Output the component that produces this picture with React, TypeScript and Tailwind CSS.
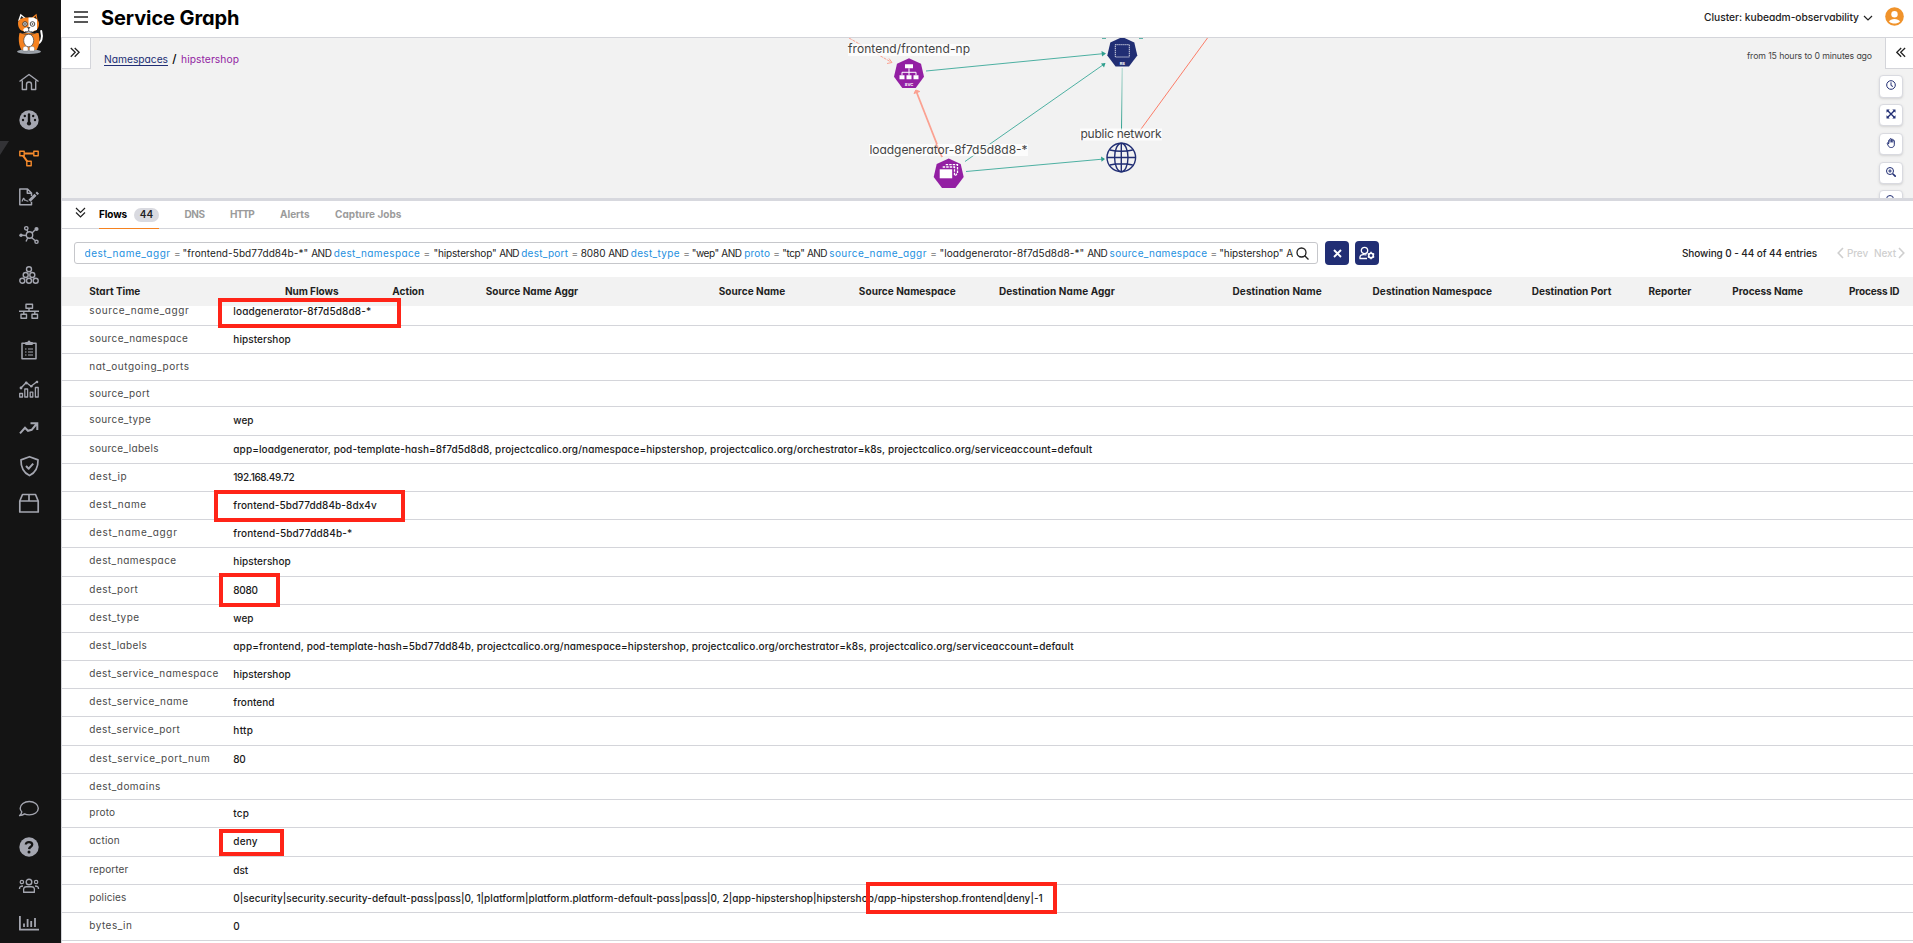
import { useLayoutEffect, useRef, useState } from 'react';
import type { ReactNode } from 'react';

/** One line of text whose tracking is adjusted so that it spans `w` pixels. */
function Fit({ t, w, className = '' }: { t: string; w: number; className?: string }) {
  const ref = useRef<HTMLSpanElement>(null);
  const [tracking, setTracking] = useState(0);
  useLayoutEffect(() => {
    if (ref.current) {
      const natural = ref.current.getBoundingClientRect().width - tracking * t.length;
      setTracking((w - natural) / t.length);
    }
  }, [t, w]);
  return (
    <span ref={ref} className={`inline-block shrink-0 whitespace-pre ${className}`} style={{ letterSpacing: `${tracking}px` }}>
      {t}
    </span>
  );
}

function Icon({ children, s = 20, className = '' }: { children: ReactNode; s?: number; className?: string }) {
  return (
    <svg
      width={s}
      height={s}
      viewBox={`0 0 ${s} ${s}`}
      fill="none"
      stroke="currentColor"
      strokeWidth="1.4"
      strokeLinejoin="round"
      className={`shrink-0 overflow-visible ${className}`}
    >
      {children}
    </svg>
  );
}

function CatLogo() {
  return (
    <svg width="30" height="42" viewBox="0 0 30 42" className="mt-[13px] ml-4 shrink-0">
      <ellipse cx="13" cy="38.6" rx="12" ry="2.4" fill="#9aa0a8" />
      <path d="M20.5 31c5-1 6.500-6 4.700-13" stroke="#fff" strokeWidth="2" fill="none" strokeLinecap="round" />
      <path d="M3.500 20C2 26 3 33 5.500 37h15c2.800-4 3.800-11 2-17z" fill="#f58220" />
      <path d="M2 8 4.500.8 10 5.200z" fill="#fff" />
      <path d="M4 6.500 5.300 3 8 5.300z" fill="#222" />
      <path d="M21.800 8.500 20.500.8 15 5.200z" fill="#f58220" />
      <path d="M20.800 6.500 19.700 3 17.500 5.200z" fill="#222" />
      <path d="M2 10c0-4 5-5.500 10.500-5.500S23 6 23 10.500 21 19 12.500 19 2 15 2 10z" fill="#f58220" />
      <path d="M12.500 4.500h5l3.500 2v10.500l-8.500 2z" fill="#fff" />
      <circle cx="9" cy="11" r="2.300" fill="#ddd" stroke="#333" strokeWidth=".9" />
      <circle cx="9" cy="11" r=".8" fill="#222" />
      <circle cx="16.500" cy="11" r="2.300" fill="#fff" stroke="#333" strokeWidth=".9" />
      <circle cx="16.500" cy="11" r=".8" fill="#222" />
      <ellipse cx="12.700" cy="17" rx="5.500" ry="2.800" fill="#fff" />
      <path d="M11.500 14.500h2.400l-1.200 1.400zM12.700 16v1.500M9 18.500c1.200.6 2.500.4 3.700-1 1.200 1.400 2.500 1.600 3.700 1" fill="#333" stroke="#333" strokeWidth=".7" />
      <path d="M4 19.500c5 2.500 12 2.500 17 0" stroke="#333" strokeWidth=".8" fill="none" />
      <ellipse cx="12.700" cy="27.500" rx="5" ry="6.300" fill="#fff" stroke="#444" strokeWidth=".7" />
      <path d="M7 38v-2.500c0-3 5-3 5 0V38zM13.500 38v-2.500c0-3 5-3 5 0V38z" fill="#fff" stroke="#666" strokeWidth=".4" />
    </svg>
  );
}

const topNav: { gap: string; icon: ReactNode }[] = [
  {
    gap: 'mt-[16.500px]',
    icon: <path d="M.5 9.500 10 2.500l9.500 7M3.300 8.500v9h4.200v-5a2.500 2.500 0 0 1 5 0v5h4.200v-9" />,
  },
  {
    gap: 'mt-[18.500px]',
    icon: (
      <>
        <circle cx="10" cy="10" r="9.700" fill="currentColor" stroke="none" />
        <path d="M10 4.500v8" stroke="#141414" strokeWidth="2.400" strokeLinecap="round" />
        <circle cx="10" cy="13.500" r="2.100" fill="#141414" stroke="none" />
        <g fill="#141414" stroke="none">
          <circle cx="5.800" cy="6" r="1.200" />
          <circle cx="14.200" cy="6" r="1.200" />
          <circle cx="4" cy="10" r="1.200" />
          <circle cx="16" cy="10" r="1.200" />
        </g>
      </>
    ),
  },
  {
    gap: 'mt-[17.500px]',
    icon: (
      <g className="text-[#f58a2c]" stroke="currentColor">
        <path d="M.8 3.300h4.400v4.400H.8zM14.800 3.300h4.400v4.400h-4.400zM7.800 13.300h4.400v4.400H7.800z" />
        <path d="M5.200 5.500h9.600M4 7.700l4.400 6" strokeWidth="2" />
      </g>
    ),
  },
  {
    gap: 'mt-[19.500px]',
    icon: (
      <>
        <path d="M12.500 9V6L8.500 2H.8v15.800h11.700v-3M8.300 2v4.200h4.200" strokeWidth="1.500" />
        <path d="M3 14.500c1.500-4 2-4 2.300-2 .3 1.500 1 0 1.500.8.500.9 1.500.8 2.500.8" strokeWidth="1.100" />
        <path d="m10.500 13.800 6-6M17.500 7l1.500-1.400" strokeWidth="3" />
      </>
    ),
  },
  {
    gap: 'mt-[17.500px]',
    icon: (
      <>
        <circle cx="10.500" cy="10" r="3.200" />
        <path d="M9 7.200 8 5M7.500 10.500 3 10.300M13 8l3-3M12.500 12.500l3.500 3" />
        <circle cx="7.300" cy="3.300" r="1.700" />
        <circle cx="2" cy="10.200" r="1.700" fill="currentColor" stroke="none" />
        <circle cx="17.500" cy="4" r="2.100" fill="currentColor" stroke="none" />
        <circle cx="17.500" cy="16.800" r="1.600" />
        <path d="M8.800 12.800 7 16.500" />
      </>
    ),
  },
  {
    gap: 'mt-[20.500px]',
    icon: (
      <>
        <circle cx="10" cy="4.300" r="2.500" />
        <circle cx="6.700" cy="10" r="2.500" />
        <circle cx="13.300" cy="10" r="2.500" />
        <circle cx="3.300" cy="15.700" r="2.500" />
        <circle cx="10" cy="15.700" r="2.500" />
        <circle cx="16.700" cy="15.700" r="2.500" />
      </>
    ),
  },
  {
    gap: 'mt-[16px]',
    icon: (
      <path d="M7 3.300h6.500v3.900H7zM2 13.300h5.500v4H2zM13 13.300h5.500v4H13zM0 10.300h20M10 7.200v3M4.800 10.300v3M15.800 10.300v3" />
    ),
  },
  {
    gap: 'mt-[19px]',
    icon: (
      <>
        <path d="M3 3.300h14v15.500H3z" strokeWidth="1.500" />
        <path d="M6.300 2h2.200a1.500 1.500 0 0 1 3 0h2.200v3H6.300z" fill="currentColor" stroke="none" />
        <path d="M6 9h1.500M9 9h5M6 12h1.500M9 12h5M6 15h1.500M9 15h5" strokeWidth="1.100" />
      </>
    ),
  },
  {
    gap: 'mt-[19px]',
    icon: (
      <>
        <path d="M.7 14.500h2.800V18H.7zM5.800 10h2.800v8H5.800zM11.200 13.200h2.600V18h-2.600zM16.400 8.500h2.800V18h-2.800z" strokeWidth="1.300" />
        <path d="m1.500 9.500 5.700-6L12 7.300l6.500-5" />
        <g fill="currentColor" stroke="none">
          <circle cx="2" cy="9" r="1.400" />
          <circle cx="7.200" cy="4" r="1.400" />
          <circle cx="12.300" cy="7.200" r="1.300" />
          <circle cx="18" cy="3" r="1.300" />
        </g>
      </>
    ),
  },
  {
    gap: 'mt-[19px]',
    icon: <path d="m1 15.300 5-5.500 3 3 3.700-1L17.500 6M11.500 5.300h6.800V12" strokeWidth="2" strokeLinejoin="miter" />,
  },
  {
    gap: 'mt-[18px]',
    icon: (
      <>
        <path d="M10.500.7 19 3.900c.2 7-2.500 12.600-8.500 15.700C4.500 16.500 1.800 10.900 2 3.900z" strokeWidth="1.700" />
        <path d="m7 10 2.700 2.700 4.500-5" strokeWidth="2" />
      </>
    ),
  },
  {
    gap: 'mt-[17px]',
    icon: <path d="M.8 8 3.500 1.500h13L19.200 8v11H.8zM.8 8h18.400M10 1.500V8" strokeWidth="1.700" />,
  },
];

const bottomNav: { gap: string; icon: ReactNode }[] = [
  {
    gap: 'mt-0',
    icon: (
      <path d="M10.300 2.500c5 0 9 3 9 6.700s-4 6.700-9 6.700c-1.800 0-3.300-.3-4.700-1-1.300 1-3 1.600-5 1.700 1.300-1 2-2.300 2.200-3.700C1.800 11.800 1.200 10.500 1.200 9.200c0-3.700 4.100-6.700 9.100-6.700z" />
    ),
  },
  {
    gap: 'mt-[17.500px]',
    icon: (
      <>
        <circle cx="10" cy="10" r="9.700" fill="currentColor" stroke="none" />
        <path d="M6.800 7.500c.3-3.400 6.600-3.200 6.400.2-.1 2-3 2.100-3.100 4.400" stroke="#141414" strokeWidth="2.300" />
        <circle cx="10" cy="15" r="1.500" fill="#141414" stroke="none" />
      </>
    ),
  },
  {
    gap: 'mt-[19px]',
    icon: (
      <>
        <circle cx="10" cy="6" r="2.800" />
        <circle cx="2.900" cy="6" r="1.700" strokeWidth="1.200" />
        <circle cx="17.100" cy="6" r="1.700" strokeWidth="1.200" />
        <path d="M4.700 16.300c-.8-5 1-5.600 2.800-5.600h5c1.800 0 3.600.6 2.800 5.600zM.5 13c0-2.300.5-3 3.500-3M19.500 13c0-2.300-.5-3-3.500-3" />
      </>
    ),
  },
  {
    gap: 'mt-[17.500px]',
    icon: <path d="M.9 3v13.700H20M5 10.500V14M8.600 6v8M12.200 8v6M16 5v9" strokeWidth="1.800" />,
  },
];

function Sidebar() {
  return (
    <nav className="flex h-full w-[61px] shrink-0 flex-col bg-[#141414] text-[#a4a6b0]">
      <CatLogo />
      {topNav.map((n, i) => (
        <div key={i} className={`relative flex h-5 shrink-0 pl-[19px] ${n.gap}`}>
          {i === 2 && (
            <svg width="9" height="15" className="absolute -top-[7px] left-0">
              <path d="M0 0h9L0 14z" fill="#333336" />
            </svg>
          )}
          <Icon>{n.icon}</Icon>
        </div>
      ))}
      <div className="grow" />
      {bottomNav.map((n, i) => (
        <div key={i} className={`flex h-5 shrink-0 pl-[19px] ${n.gap}`}>
          <Icon>{n.icon}</Icon>
        </div>
      ))}
      <div className="h-[10px] shrink-0" />
    </nav>
  );
}

function Header() {
  return (
    <header className="flex h-[38px] shrink-0 items-center border-b border-[#d4d5da] pr-[9px] pl-[13px]">
      <svg width="14" height="12" className="mt-[-3px]">
        <path d="M0 1h14M0 6h14M0 11h14" stroke="#222" strokeWidth="1.400" />
      </svg>
      <h1 className="-mt-[2px] ml-[13px] text-[20px] leading-6 font-bold text-black">
        <Fit t="Service Graph" w={138.500} />
      </h1>
      <div className="grow" />
      <Fit t="Cluster: kubeadm-observability" w={155} className="-mt-px text-[10.250px] font-medium text-[#222]" />
      <svg width="10" height="6" className="-mt-px ml-1">
        <path d="m1 1 4 4 4-4" fill="none" stroke="#222" strokeWidth="1.200" />
      </svg>
      <svg width="19" height="19" viewBox="0 0 19 19" className="-mt-1 ml-3">
        <circle cx="9.500" cy="9.500" r="9.300" fill="#f0932b" />
        <circle cx="9.500" cy="7.200" r="3.200" fill="#fff" />
        <path d="M4 14.500c1.300-3.400 9.700-3.400 11 0-3 2.700-8 2.700-11 0z" fill="#fff" />
      </svg>
    </header>
  );
}

const heptagon = '0,-15 12,-9.600 15,3.500 6.700,14.600 -6.700,14.600 -15,3.500 -12,-9.600';

function GraphCanvas() {
  return (
    <svg width="1851" height="160" viewBox="62 38 1851 160" className="block shrink-0" fill="none">
      <defs>
        <linearGradient id="fade" x1="0" y1="68" x2="0" y2="130" gradientUnits="userSpaceOnUse">
          <stop offset="0" stopColor="#a9d5cc" />
          <stop offset="1" stopColor="#2f9f8e" />
        </linearGradient>
      </defs>
      <g stroke="#fba191">
        <path d="M849 38l42 24" strokeDasharray="3 1" />
        <path d="m887 63.500 5-1-3-4" />
        <path d="M942 157 916.500 92" strokeWidth="1.800" />
      </g>
      <path d="m914 93.500 1.800-3.500 4 1.500z" fill="#fba191" stroke="#fba191" />
      <path d="M1207.500 38 1133 140" stroke="#fb7d68" />
      <g stroke="#3aa898" strokeWidth=".9">
        <path d="M926 71 1105 53.500" />
        <path d="M965 161.500 1105 63.500" />
        <path d="M966 171.500 1104 159" />
      </g>
      <g fill="#2f9f8e">
        <path d="m1101.500 51 4.500 2.400-4 3zM1101 63.500l4.500-.5-1.500 4.500zM1101 156.500l4 2.500-3.500 2.700zM1102 38h4v.8h-4zM1139 38h4v.8h-4z" />
      </g>
      <path d="M1122.200 68 1121.500 130" stroke="url(#fade)" />
      <g fill="#fff" fillOpacity=".75">
        <path d="M848 44h122v12H848zM869 144h159v12H869zM1080 128.500h82v12h-82z" />
      </g>
      <path d="M942 157 936 144" stroke="#fba191" strokeWidth="1.500" />
      <g fill="#444" fontSize="12" lengthAdjust="spacing">
        <text x="848" y="53" textLength="122">frontend/frontend-np</text>
        <text x="869.500" y="153.500" textLength="158">loadgenerator-8f7d5d8d8-*</text>
        <text x="1080.500" y="138" textLength="81">public network</text>
      </g>
      <g transform="translate(909 73.300)">
        <polygon points={heptagon} fill="#931fa3" />
        <path d="M-4-9h8v4h-8zM-9.500 2h5v4h-5zM-2.500 2h5v4h-5zM4.500 2h5v4h-5z" fill="#fff" />
        <path d="M0-5v7M-7 2v-3H7v3" stroke="#fff" />
        <text x="0" y="12.700" textAnchor="middle" fontSize="4" fontWeight="700" fill="#fff">SVC</text>
      </g>
      <g transform="translate(948.700 173.500)">
        <polygon points={heptagon} fill="#931fa3" />
        <path d="M-9-4.200h12.500v9H-9z" fill="#fff" />
        <path d="M-6-6.500H5.800V2.500" stroke="#fff" strokeDasharray="2.500 1" strokeWidth="1.300" />
        <path d="M-3-8.800H8.800V-.5L6.500 2.500" stroke="#fff" strokeDasharray="2.500 1" strokeWidth="1.300" />
      </g>
      <g transform="translate(1122.300 52)">
        <polygon points={heptagon} fill="#212e74" />
        <path d="M-7-7.300H7V5H-7z" stroke="#fff" strokeWidth=".9" strokeDasharray="1.200 .8" />
        <text x="0" y="12.700" textAnchor="middle" fontSize="4" fontWeight="700" fill="#fff">RS</text>
      </g>
      <g transform="translate(1121.300 157.500)" stroke="#212e74" strokeWidth="1.400">
        <circle r="14.300" fill="#f2f2f2" />
        <ellipse rx="6.700" ry="14.300" />
        <path d="M0-14.300v28.600M-14.300 0h28.600M-11.500-7.500c7 1.500 16 1.500 23 0M-11.500 7.500c7-1.500 16-1.500 23 0" />
      </g>
    </svg>
  );
}

const tools: ReactNode[] = [
  <g key="clock">
    <circle cx="5" cy="5" r="4.300" />
    <path d="M5 2.300V5.500l2 1" />
  </g>,
  <g key="expand">
    <path d="m1.500 1.500 7 7M8.500 1.500l-7 7" strokeWidth="1.400" />
    <path d="M.5.500h3.200L.5 3.700zM9.500.5v3.200L6.300.5zM.5 9.500V6.300l3.200 3.200zM9.500 9.500H6.300l3.200-3.200z" fill="currentColor" stroke="none" />
  </g>,
  <path
    key="hand"
    d="M2.700 6V2.500c0-.9 1.300-.9 1.300 0V1.200c0-.9 1.400-.9 1.400 0v.6c0-.9 1.400-.9 1.400 0v.9c0-.9 1.500-.8 1.500.1v4c0 3.300-5 3.600-6 1L1.300 5.500c-.3-.9.700-1.200 1.400.5zM4 2.500v2M5.400 1.800v2.600M6.800 2.500v2"
  />,
  <g key="zoomin">
    <circle cx="4" cy="4" r="3.500" />
    <path d="M4 2.300v3.400M2.300 4h3.400" />
    <path d="m6.700 6.700 3 3" strokeWidth="1.600" />
  </g>,
  <g key="zoomout">
    <circle cx="4" cy="4" r="3.500" />
    <path d="M2.300 4h3.400M6.700 6.700l3 3" />
  </g>,
];

const toolGap = ['mt-[6px]', 'mt-[6px]', 'mt-[6.500px]', 'mt-[6.500px]', 'mt-[6px]'];

function GraphPanel() {
  return (
    <section className="relative h-[160px] shrink-0 overflow-hidden bg-[#f2f2f2]">
      <GraphCanvas />
      <div className="absolute inset-0 flex justify-between">
        <div className="flex">
          <div className="flex h-[31px] w-[29px] items-center justify-center border-r border-b border-[#d4d5da] bg-white pr-[3px] pb-px">
            <svg width="10" height="11">
              <path d="m.8 1 4.400 4.300L.8 9.800M4.700 1l4.400 4.300-4.400 4.500" fill="none" stroke="#222" strokeWidth="1.300" />
            </svg>
          </div>
          <div className="flex h-[42px] items-center pl-[13px] text-[10.250px] leading-3">
            <Fit t="Namespaces" w={64} className="border-b border-[#212e74] text-[#212e74]" />
            <span className="w-[13px] text-center text-[11.500px] font-medium text-black">/</span>
            <Fit t="hipstershop" w={58} className="text-[#931fa3]" />
          </div>
        </div>
        <div className="flex">
          <Fit t="from 15 hours to 0 minutes ago" w={125} className="mt-3 mr-[7px] text-[8.750px] leading-3 text-[#444]" />
          <div className="flex flex-col items-end">
            <div className="flex h-[31px] w-[28px] shrink-0 items-center justify-center border-b border-l border-[#d4d5da] bg-white pr-px pl-1 pb-px">
              <svg width="10" height="11">
                <path d="M5.200 1 .8 5.300l4.400 4.500M9.100 1 4.700 5.300l4.400 4.500" fill="none" stroke="#222" strokeWidth="1.300" />
              </svg>
            </div>
            {tools.map((t, i) => (
              <div
                key={i}
                className={`mr-[10px] flex h-[22.500px] w-6 shrink-0 items-center justify-center rounded-[4px] border border-[#d9dae0] bg-white pb-[2px] text-[#212e74] shadow-sm ${toolGap[i]}`}
              >
                <svg width="10" height="10" viewBox="0 0 10 10" fill="none" stroke="currentColor" strokeWidth="1">
                  {t}
                </svg>
              </div>
            ))}
          </div>
        </div>
      </div>
    </section>
  );
}

function Tabs() {
  return (
    <div className="flex h-7 shrink-0 items-stretch border-b border-[#d4d5da] pl-[13px] text-[10px] font-bold text-[#9b9b9b]">
      <svg width="11" height="12" className="mt-[6px]">
        <path d="m1 1 4.500 4.500L10 1M1 5.500 5.500 10 10 5.500" fill="none" stroke="#222" strokeWidth="1.200" />
      </svg>
      <div className="-mb-px ml-[13px] flex w-[60px] items-center justify-between border-b border-[#f58220] text-[#222]">
        <Fit t="Flows" w={28} className="text-black" />
        <span className="flex h-[14px] w-[25px] items-center justify-center rounded-full bg-[#d9dae0] font-semibold">
          44
        </span>
      </div>
      <Fit t="DNS" w={20} className="ml-[25.500px] leading-[27px]" />
      <Fit t="HTTP" w={24} className="ml-[25.500px] leading-[27px]" />
      <Fit t="Alerts" w={29.500} className="ml-[26px] leading-[27px]" />
      <Fit t="Capture Jobs" w={66.500} className="ml-[25.500px] leading-[27px]" />
    </div>
  );
}

const tokens: [string, number, string][] = [
  ['dest_name_aggr ', 89.500, 'k'],
  ['= ', 8.500, 'o'],
  ['"frontend-5bd77dd84b-*" ', 128.700, 'v'],
  ['AND ', 22.500, 'v'],
  ['dest_namespace ', 89.800, 'k'],
  ['= ', 10, 'o'],
  ['"hipstershop" ', 65.700, 'v'],
  ['AND ', 22, 'v'],
  ['dest_port ', 50.200, 'k'],
  ['= ', 9.300, 'o'],
  ['8080 ', 27.500, 'v'],
  ['AND ', 22.500, 'v'],
  ['dest_type ', 52.500, 'k'],
  ['= ', 8.500, 'o'],
  ['"wep" ', 29.500, 'v'],
  ['AND ', 23, 'v'],
  ['proto ', 29, 'k'],
  ['= ', 9, 'o'],
  ['"tcp" ', 24.700, 'v'],
  ['AND ', 22.300, 'v'],
  ['source_name_aggr ', 101, 'k'],
  ['= ', 9.300, 'o'],
  ['"loadgenerator-8f7d5d8d8-*" ', 147.700, 'v'],
  ['AND ', 22.400, 'v'],
  ['source_namespace ', 101, 'k'],
  ['= ', 8.600, 'o'],
  ['"hipstershop" ', 67, 'v'],
  ['AND', 19, 'v'],
];

const tone: Record<string, string> = { k: 'text-[#1e90e0]', o: 'text-[#777]', v: 'text-[#1c1c1c]' };

function FilterBar() {
  return (
    <div className="flex h-12 shrink-0 items-center pr-2 pl-3 text-[10px]">
      <div className="flex h-[22px] w-[1244px] items-center justify-between rounded-[3px] border border-[#c6c7cb] pr-2 pl-[9.500px]">
        <div className="flex w-[1208.500px] overflow-hidden leading-5">
          {tokens.map(([t, w, k], i) => (
            <Fit key={i} t={t} w={w} className={tone[k]} />
          ))}
        </div>
        <svg width="13" height="13" viewBox="0 0 13 13" fill="none" stroke="#222" strokeWidth="1.300">
          <circle cx="5.500" cy="5.500" r="4.500" />
          <path d="m8.700 8.700 3.800 3.800" />
        </svg>
      </div>
      <div className="ml-[7px] flex h-6 w-6 items-center justify-center rounded-[4px] bg-[#212e74]">
        <svg width="9" height="9">
          <path d="m1 1 7 7M8 1 1 8" stroke="#fff" strokeWidth="1.900" />
        </svg>
      </div>
      <div className="ml-[6px] flex h-6 w-6 items-center justify-center rounded-[4px] bg-[#212e74]">
        <svg width="16" height="15" viewBox="0 0 16 15" fill="none" stroke="#fff" strokeWidth="1.300">
          <circle cx="5.500" cy="4.500" r="3.200" />
          <path d="M8 12.500H1C.5 9.500 2.500 8.300 5 8.600l2.500.2" />
          <circle cx="12" cy="9.500" r="2.300" strokeWidth="1.600" />
          <path d="M12 5.800v1.500M12 11.700v1.500M8.800 7.600l1.300.8M13.900 10.600l1.300.8M15.200 7.600l-1.300.8M10.100 10.600l-1.300.8" strokeWidth="1.500" />
        </svg>
      </div>
      <div className="grow" />
      <Fit t="Showing 0 - 44 of 44 entries" w={135} className="font-medium text-[#222]" />
      <svg width="7" height="12" className="ml-5">
        <path d="M6 1 1.200 6 6 11" fill="none" stroke="#cfcfcf" strokeWidth="1.600" />
      </svg>
      <Fit t="Prev" w={21} className="ml-[3px] font-medium text-[#cfcfcf]" />
      <Fit t="Next" w={22} className="ml-[6px] font-medium text-[#cfcfcf]" />
      <svg width="7" height="12" className="ml-[2px]">
        <path d="m1 1 4.800 5L1 11" fill="none" stroke="#cfcfcf" strokeWidth="1.600" />
      </svg>
    </div>
  );
}

const columns: [string, number][] = [
  ['Start Time', 51],
  ['Num Flows', 53.500],
  ['Action', 32],
  ['Source Name Aggr', 92.500],
  ['Source Name', 66.500],
  ['Source Namespace', 96.800],
  ['Destination Name Aggr', 116],
  ['Destination Name', 89.200],
  ['Destination Namespace', 119.500],
  ['Destination Port', 79.700],
  ['Reporter', 43],
  ['Process Name', 70.500],
  ['Process ID', 50.500],
];

type Row = { label: string; lw: number; value?: string; vw?: number; h: string; mark?: string };

const rows: Row[] = [
  { label: 'source_name_aggr', lw: 100, value: 'loadgenerator-8f7d5d8d8-*', vw: 138, h: 'h-7', mark: 'left-[156px] w-[183px] top-0 h-[30px]' },
  { label: 'source_namespace', lw: 99, value: 'hipstershop', vw: 57.500, h: 'h-7' },
  { label: 'nat_outgoing_ports', lw: 100.300, h: 'h-[27px]' },
  { label: 'source_port', lw: 60.500, h: 'h-[26px]' },
  { label: 'source_type', lw: 62, value: 'wep', vw: 20.300, h: 'h-[29px]' },
  { label: 'source_labels', lw: 69.500, value: 'app=loadgenerator, pod-template-hash=8f7d5d8d8, projectcalico.org/namespace=hipstershop, projectcalico.org/orchestrator=k8s, projectcalico.org/serviceaccount=default', vw: 859, h: 'h-7' },
  { label: 'dest_ip', lw: 38, value: '192.168.49.72', vw: 61, h: 'h-7' },
  { label: 'dest_name', lw: 57.500, value: 'frontend-5bd77dd84b-8dx4v', vw: 143.500, h: 'h-7', mark: 'left-[152px] w-[191px] -top-[2px] h-[32px]' },
  { label: 'dest_name_aggr', lw: 88.300, value: 'frontend-5bd77dd84b-*', vw: 119, h: 'h-7' },
  { label: 'dest_namespace', lw: 87.300, value: 'hipstershop', vw: 57.500, h: 'h-[29px]' },
  { label: 'dest_port', lw: 49, value: '8080', vw: 24.500, h: 'h-7', mark: 'left-[157px] w-[61px] -top-[4px] h-[34px]' },
  { label: 'dest_type', lw: 50.300, value: 'wep', vw: 20.300, h: 'h-7' },
  { label: 'dest_labels', lw: 58, value: 'app=frontend, pod-template-hash=5bd77dd84b, projectcalico.org/namespace=hipstershop, projectcalico.org/orchestrator=k8s, projectcalico.org/serviceaccount=default', vw: 840.500, h: 'h-7' },
  { label: 'dest_service_namespace', lw: 129.500, value: 'hipstershop', vw: 57.500, h: 'h-7' },
  { label: 'dest_service_name', lw: 99.300, value: 'frontend', vw: 41.300, h: 'h-7' },
  { label: 'dest_service_port', lw: 91, value: 'http', vw: 20, h: 'h-[29px]' },
  { label: 'dest_service_port_num', lw: 121, value: '80', vw: 12, h: 'h-7' },
  { label: 'dest_domains', lw: 71.500, h: 'h-[26px]' },
  { label: 'proto', lw: 26, value: 'tcp', vw: 16, h: 'h-7' },
  { label: 'action', lw: 30.500, value: 'deny', vw: 24.300, h: 'h-[29px]', mark: 'left-[157px] w-[65px] top-[1px] h-[27px]' },
  { label: 'reporter', lw: 39, value: 'dst', vw: 15, h: 'h-7' },
  { label: 'policies', lw: 37, value: '0|security|security.security-default-pass|pass|0, 1|platform|platform.platform-default-pass|pass|0, 2|app-hipstershop|hipstershop/app-hipstershop.frontend|deny|-1', vw: 809.500, h: 'h-7', mark: 'left-[804px] w-[191px] -top-[3px] h-[32px]' },
  { label: 'bytes_in', lw: 43, value: '0', vw: 6, h: 'h-7' },
];

function FlowTable() {
  return (
    <div className="flex min-h-0 grow flex-col text-[10px]">
      <div className="grid h-[29px] shrink-0 grid-cols-[195.700px_107.300px_93.400px_233.100px_140.100px_140.100px_233.600px_140px_159.100px_116.800px_83.900px_116.600px_60px] items-center bg-[#f2f2f2] pb-px pl-[27.300px] font-bold text-[#1f1f1f]">
        {columns.map(([t, w]) => (
          <Fit key={t} t={t} w={w} className="justify-self-start" />
        ))}
      </div>
      <div className="-mt-2 flex flex-col">
        {rows.map((r) => (
          <div key={r.label} className={`relative flex shrink-0 border-b border-[#d4d5da] pl-[27.300px] leading-4 ${r.h}`}>
            <div className="w-[144px] shrink-0 pt-1 text-[#4a4a4a]">
              <Fit t={r.label} w={r.lw} />
            </div>
            <div className="pt-[5px] font-medium text-[#1a1a1a]">{r.value && <Fit t={r.value} w={r.vw ?? 0} />}</div>
            {r.mark && <div className={`absolute z-10 border-4 border-[#ff2418] ${r.mark}`} />}
          </div>
        ))}
      </div>
    </div>
  );
}

export default function App() {
  return (
    <div className="flex h-[943px] w-[1913px] overflow-hidden bg-white font-['Inter','Noto_Sans',sans-serif] [font-feature-settings:'cv11']">
      <Sidebar />
      <main className="flex min-w-0 grow flex-col">
        <Header />
        <div className="flex min-h-0 grow flex-col overflow-hidden border-l border-[#d4d5da]">
          <GraphPanel />
          <div className="h-[3px] shrink-0 bg-[#d7d8de]" />
          <Tabs />
          <FilterBar />
          <FlowTable />
        </div>
      </main>
    </div>
  );
}
